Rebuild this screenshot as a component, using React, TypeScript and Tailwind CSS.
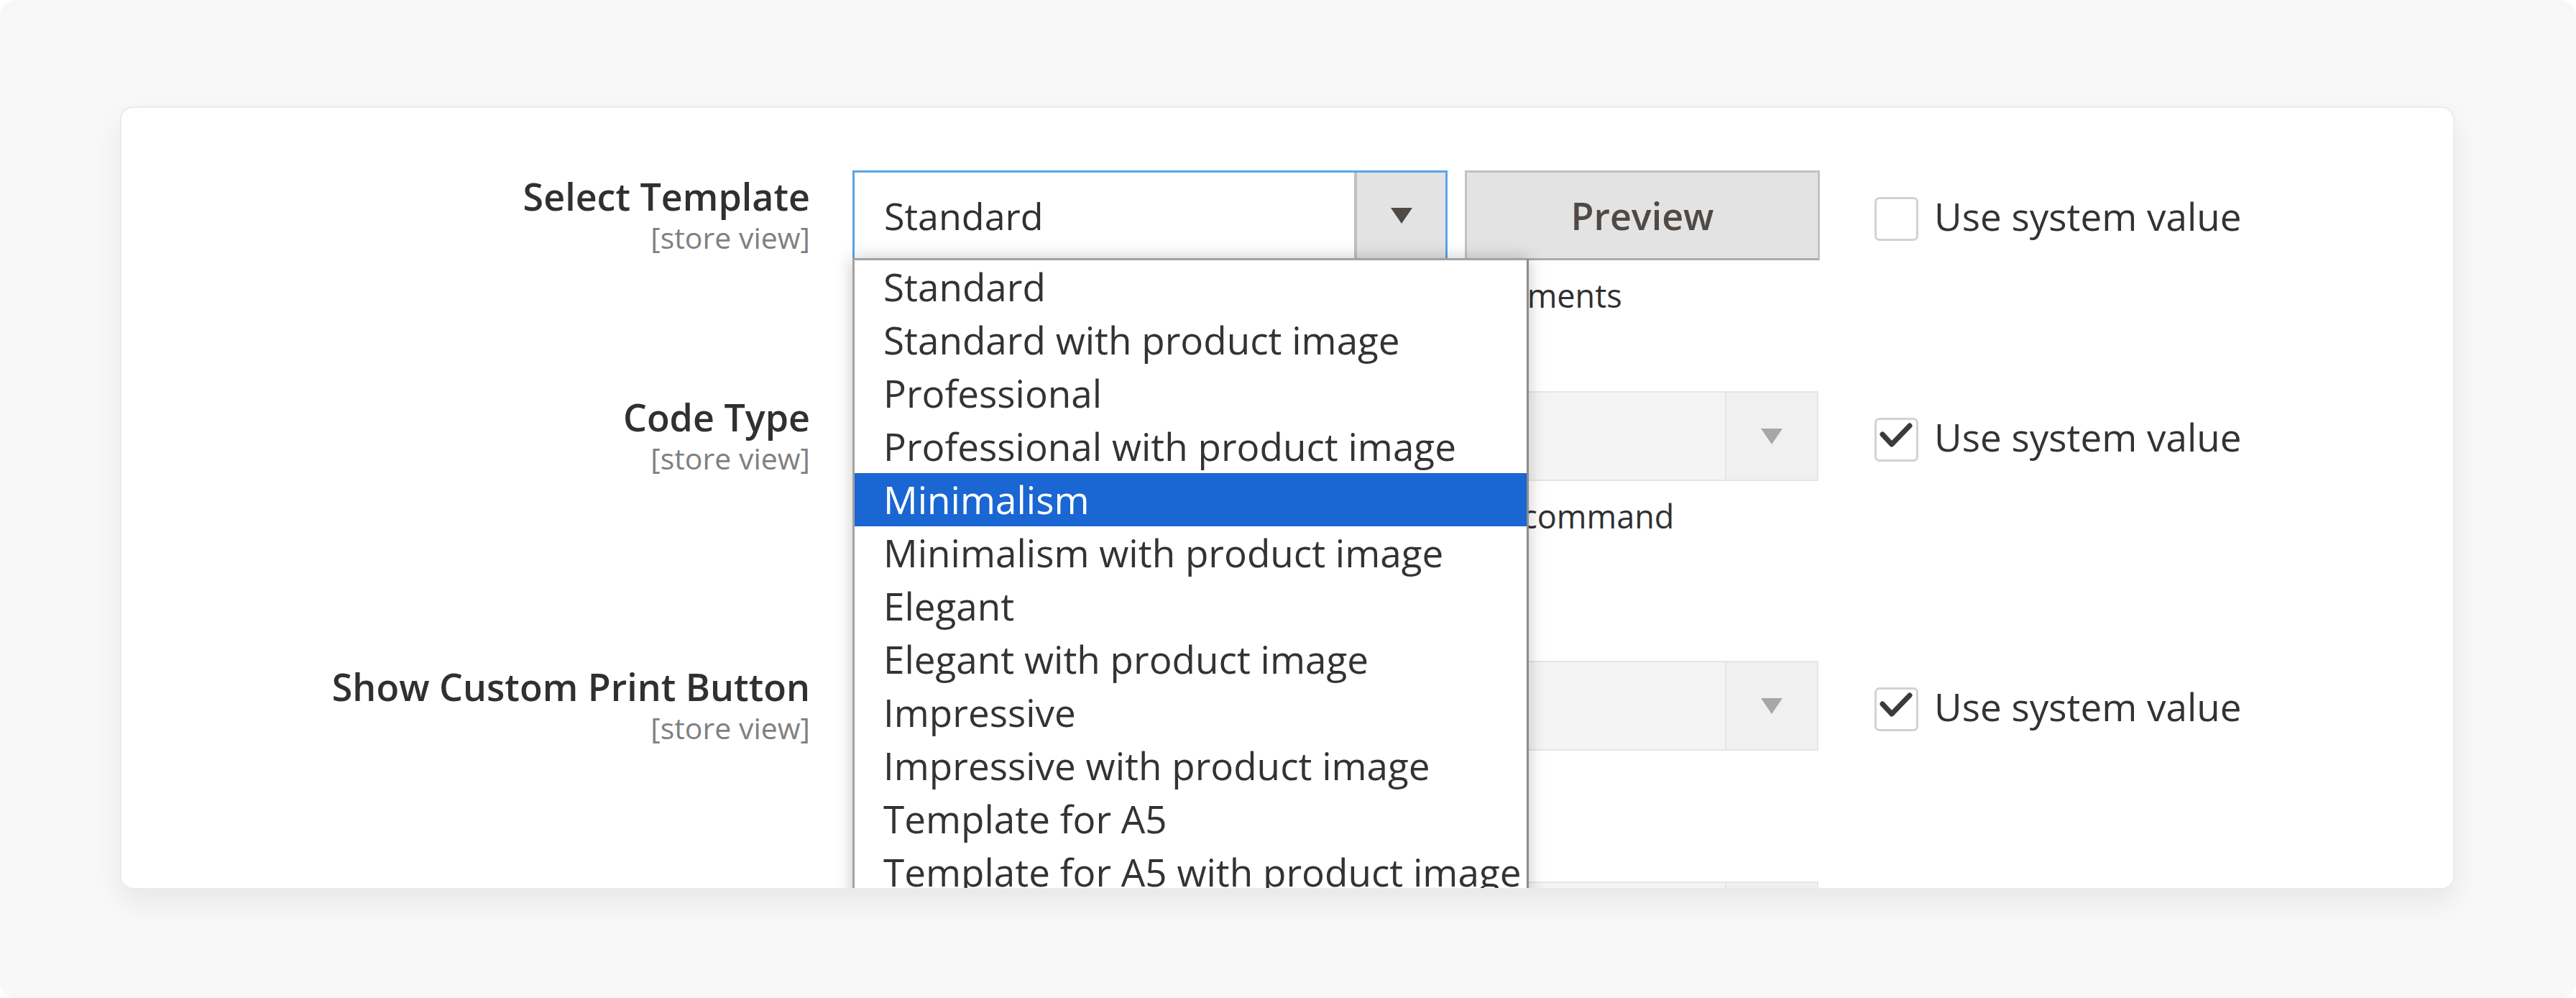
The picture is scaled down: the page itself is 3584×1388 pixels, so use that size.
import React from 'react';

const templates = [
    'Standard',
    'Standard with product image',
    'Professional',
    'Professional with product image',
    'Minimalism',
    'Minimalism with product image',
    'Elegant',
    'Elegant with product image',
    'Impressive',
    'Impressive with product image',
    'Template for A5',
    'Template for A5 with product image',
    'Template for A6',
];

function Arrow({ disabled }: { disabled?: boolean }) {
    return (
        <div
            className={`w-0 h-0 border-l-[15px] border-r-[15px] border-t-[22px] border-l-transparent border-r-transparent ${
                disabled ? 'border-t-[#a9a6a3]' : 'border-t-[#514943]'
            }`}
        />
    );
}

function SystemValue({ checked }: { checked?: boolean }) {
    return (
        <div className="ml-[76px] h-[125px] pt-[10px] flex items-center">
            <div className="w-[61px] h-[61px] rounded-[7px] border-[3px] border-[#d2d2d2] bg-white flex items-center justify-center">
                {checked && (
                    <svg width="55" height="55" viewBox="0 0 55 55">
                        <path
                            d="M8 20 L21 34 L46 8"
                            fill="none"
                            stroke="#3b3b3b"
                            strokeWidth="7"
                            strokeLinecap="round"
                            strokeLinejoin="round"
                        />
                    </svg>
                )}
            </div>
            <span className="ml-[22px] text-[53px] leading-[70px] text-[#333333] -mt-[8px]">Use system value</span>
        </div>
    );
}

function Label({ title }: { title: string }) {
    return (
        <div className="w-[958px] shrink-0 flex flex-col items-end text-right">
            <span className="text-[52px] leading-[71px] font-semibold text-[#303030]">{title}</span>
            <span className="text-[41px] leading-[44px] text-[#808080]">[store view]</span>
        </div>
    );
}

function DisabledSelect() {
    return (
        <div className="w-[1344px] h-[125px] flex bg-[#f4f4f4] border-2 border-[#e6e6e6]">
            <div className="flex-1" />
            <div className="w-[128px] h-full border-l-2 border-[#e4e4e4] bg-[#f0f0f0] flex items-center justify-center">
                <Arrow disabled />
            </div>
        </div>
    );
}

function Note({ lines }: { lines: string[] }) {
    return (
        <div className="mt-[15px] text-[45px] leading-[68px] text-[#303030] whitespace-nowrap">
            {lines.map((l) => (
                <div key={l}>{l}</div>
            ))}
        </div>
    );
}

export default function App() {
    return (
        <div className="bg-white min-h-screen">
            <div className="w-[3584px] h-[1388px] bg-[#f8f8f8] rounded-[22px] pt-[148px] pl-[167px] font-['Open_Sans',sans-serif]">
                <div className="w-[3248px] h-[1089px] bg-white rounded-[18px] border-2 border-[#ebebeb] shadow-[0_18px_40px_rgba(0,0,0,0.07)] overflow-hidden pt-[87px]">
                    {/* Select Template */}
                    <div className="flex items-start mb-[99px]">
                        <Label title="Select Template" />
                        <div className="ml-[59px] w-[1346px]">
                            <div className="flex">
                                <div className="relative w-[828px] h-[125px]">
                                    <div className="w-full h-full flex bg-white border-[3px] border-[#5aa5e8]">
                                        <div className="flex-1 flex items-center pl-[41px] text-[52px] text-[#303030]">
                                            Standard
                                        </div>
                                        <div className="w-[127px] h-full border-l-[4px] border-[#bfbfbf] bg-[#e3e3e3] flex items-center justify-center">
                                            <Arrow />
                                        </div>
                                    </div>
                                    <div className="absolute left-0 top-[122px] z-10 w-[941px] bg-white border-[3px] border-[#a2a2a2] border-r-[#8c8c8c] shadow-[0_0_22px_rgba(0,0,0,0.22)]">
                                        {templates.map((t) => (
                                            <div
                                                key={t}
                                                className={`h-[74px] flex items-center pl-[40px] text-[53px] whitespace-nowrap ${
                                                    t === 'Minimalism' ? 'bg-[#1a66d2] text-white' : 'text-[#333333]'
                                                }`}
                                            >
                                                {t}
                                            </div>
                                        ))}
                                    </div>
                                </div>
                                <button className="ml-[24px] w-[494px] h-[125px] bg-[#e3e3e3] border-[3px] border-[#c2c2c2] border-b-[#acacac] text-[52px] font-semibold text-[#514943]">
                                    Preview
                                </button>
                            </div>
                            <Note lines={['Choose the default template for all PDF documents']} />
                        </div>
                        <SystemValue />
                    </div>

                    {/* Code Type */}
                    <div className="flex items-start mb-[99px]">
                        <Label title="Code Type" />
                        <div className="ml-[59px] w-[1346px]">
                            <DisabledSelect />
                            <Note
                                lines={[
                                    'Insert your code into the templates with the command',
                                    'in the template editor.',
                                ]}
                            />
                        </div>
                        <SystemValue checked />
                    </div>

                    {/* Show Custom Print Button */}
                    <div className="flex items-start mb-[99px]">
                        <Label title="Show Custom Print Button" />
                        <div className="ml-[59px] w-[1346px]">
                            <DisabledSelect />
                            <Note lines={['Show print button on order view page']} />
                        </div>
                        <SystemValue checked />
                    </div>

                    {/* next row, cut off by the panel edge */}
                    <div className="flex items-start">
                        <div className="w-[958px] shrink-0" />
                        <div className="ml-[59px] w-[1346px]">
                            <DisabledSelect />
                        </div>
                    </div>
                </div>
            </div>
        </div>
    );
}
